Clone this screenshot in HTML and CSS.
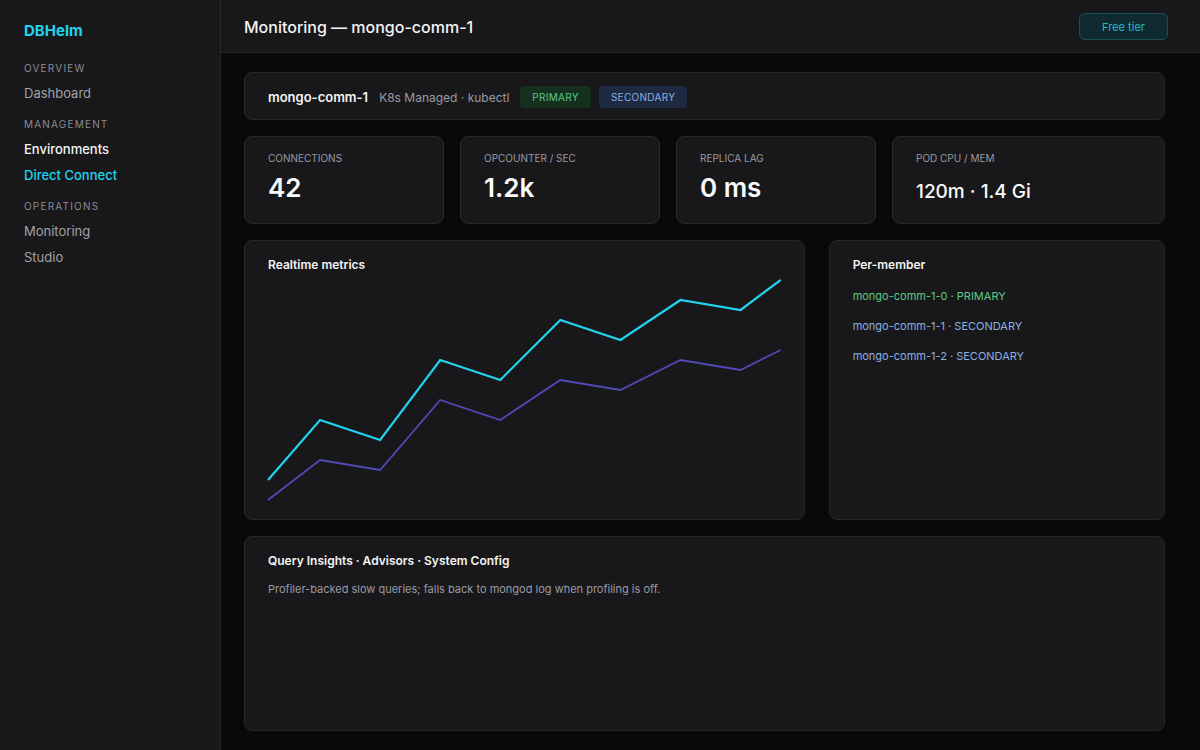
FILE: index.html
```html
<!DOCTYPE html>
<html lang="en">
<head>
    <meta charset="UTF-8">
    <meta name="viewport" content="width=device-width, initial-scale=1.0">
    <title>DBHelm - Monitoring</title>
    <link rel="stylesheet" href="styles.css">
</head>
<body>

    <div class="app">
        <!-- Sidebar navigation -->
        <aside class="sidebar">
            <div class="brand">DBHelm</div>

            <div class="nav-group">Overview</div>
            <a class="nav-link">Dashboard</a>

            <div class="nav-group">Management</div>
            <a class="nav-link strong">Environments</a>
            <a class="nav-link active">Direct Connect</a>

            <div class="nav-group">Operations</div>
            <a class="nav-link">Monitoring</a>
            <a class="nav-link">Studio</a>
        </aside>

        <div class="main">
            <header class="topbar">
                <h1>Monitoring — mongo-comm-1</h1>
                <button class="tier-button">Free tier</button>
            </header>

            <div class="content">
                <!-- Cluster summary -->
                <div class="card cluster-bar">
                    <span class="cluster-name">mongo-comm-1</span>
                    <span class="cluster-meta">K8s Managed · kubectl</span>
                    <span class="badge badge-primary">PRIMARY</span>
                    <span class="badge badge-secondary">SECONDARY</span>
                </div>

                <!-- Stats -->
                <div class="stats">
                    <div class="card stat">
                        <div class="stat-label">Connections</div>
                        <div class="stat-value">42</div>
                    </div>
                    <div class="card stat">
                        <div class="stat-label">Opcounter / sec</div>
                        <div class="stat-value">1.2k</div>
                    </div>
                    <div class="card stat">
                        <div class="stat-label">Replica lag</div>
                        <div class="stat-value">0 ms</div>
                    </div>
                    <div class="card stat">
                        <div class="stat-label">Pod CPU / MEM</div>
                        <div class="stat-value small">120m · 1.4 Gi</div>
                    </div>
                </div>

                <div class="panels">
                    <div class="card panel">
                        <h2>Realtime metrics</h2>
                        <svg class="chart" viewBox="0 0 512 220" preserveAspectRatio="none">
                            <polyline class="line-ops" points="0,200 52,140 112,160 172,80 232,100 292,40 352,60 412,20 472,30 512,0" />
                            <polyline class="line-conn" points="0,220 52,180 112,190 172,120 232,140 292,100 352,110 412,80 472,90 512,70" />
                        </svg>
                    </div>

                    <div class="card panel">
                        <h2>Per-member</h2>
                        <ul class="members">
                            <li class="member primary">mongo-comm-1-0 · PRIMARY</li>
                            <li class="member secondary">mongo-comm-1-1 · SECONDARY</li>
                            <li class="member secondary">mongo-comm-1-2 · SECONDARY</li>
                        </ul>
                    </div>
                </div>

                <div class="card panel insights">
                    <h2>Query Insights · Advisors · System Config</h2>
                    <p>Profiler-backed slow queries; falls back to mongod log when profiling is off.</p>
                </div>
            </div>
        </div>
    </div>

</body>
</html>
```

FILE: styles.css
```css
* {
    box-sizing: border-box;
}

body {
    margin: 0;
    font-family: Inter, "Noto Sans", Arial, sans-serif;
    background-color: #09090b;
    color: #e4e4e7;
}

.app {
    display: flex;
    height: 750px;
}

/* Sidebar */
.sidebar {
    width: 221px;
    flex-shrink: 0;
    background-color: #18181b;
    border-right: 1px solid #27272a;
    padding: 21px 24px;
}

.brand {
    color: #22d3ee;
    font-size: 15px;
    font-weight: 700;
    margin-bottom: 20px;
}

.nav-group {
    color: #8b8b93;
    font-size: 10px;
    letter-spacing: 1.2px;
    text-transform: uppercase;
    margin: 0 0 9px;
    line-height: 16px;
}

.nav-link {
    display: block;
    color: #a1a1aa;
    font-size: 13px;
    line-height: 16px;
    margin-bottom: 10px;
    cursor: pointer;
}

.nav-link + .nav-group {
    margin-top: 15px;
}

.nav-link.strong {
    color: #f4f4f5;
    font-weight: 500;
}

.nav-link.active {
    color: #22d3ee;
    font-weight: 500;
}

/* Main area */
.main {
    flex: 1;
    display: flex;
    flex-direction: column;
    min-width: 0;
}

.topbar {
    height: 53px;
    flex-shrink: 0;
    display: flex;
    align-items: center;
    justify-content: space-between;
    padding: 0 32px 2px 23px;
    background-color: #18181b;
    border-bottom: 1px solid #27272a;
}

.topbar h1 {
    margin: 0;
    font-size: 16px;
    font-weight: 500;
    color: #f4f4f5;
    padding-top: 3px;
}

.tier-button {
    font-family: inherit;
    font-size: 11px;
    color: #22b8cf;
    background-color: #0f2a30;
    border: 1px solid #1c4f59;
    border-radius: 6px;
    width: 89px;
    height: 27px;
    margin-top: 3px;
    cursor: pointer;
}

.content {
    flex: 1;
    display: flex;
    flex-direction: column;
    gap: 16px;
    padding: 19px 23px 19px;
    max-width: 967px;
    min-height: 0;
}

.card {
    background-color: #18181b;
    border: 1px solid #27272a;
    border-radius: 8px;
}

/* Cluster summary bar */
.cluster-bar {
    height: 48px;
    flex-shrink: 0;
    display: flex;
    align-items: center;
    padding: 2px 23px 0;
}

.cluster-name {
    font-size: 13px;
    font-weight: 600;
    color: #f4f4f5;
    margin-right: 11px;
}

.cluster-meta {
    font-size: 12px;
    color: #9a9aa2;
    margin-right: 11px;
}

.badge {
    font-size: 10px;
    letter-spacing: 0.3px;
    height: 22px;
    line-height: 22px;
    padding: 0 12px;
    border-radius: 4px;
    margin-right: 8px;
}

.badge-primary {
    background-color: #15301f;
    color: #5dc985;
}

.badge-secondary {
    background-color: #1d2a42;
    color: #8eb0e0;
}

/* Stats row */
.stats {
    display: grid;
    grid-template-columns: 200px 200px 200px 1fr;
    gap: 16px;
}

.stat {
    height: 88px;
    padding: 14px 23px;
}

.stat-label {
    font-size: 10px;
    color: #9a9aa2;
    text-transform: uppercase;
    line-height: 14px;
}

.stat-value {
    font-size: 26px;
    font-weight: 600;
    color: #fafafa;
    line-height: 34px;
    margin-top: 6px;
}

.stat-value.small {
    font-size: 19px;
    font-weight: 500;
    margin-top: 10px;
}

/* Panels */
.panels {
    display: grid;
    grid-template-columns: 5fr 3fr;
    gap: 24px;
}

.panel {
    padding: 15px 23px 19px;
}

.panel h2 {
    margin: 0;
    font-size: 12px;
    font-weight: 600;
    color: #f4f4f5;
    line-height: 18px;
}

.chart {
    display: block;
    width: 100%;
    height: 220px;
    margin-top: 6px;
    overflow: visible;
}

.chart polyline {
    fill: none;
    stroke-linejoin: miter;
}

.line-ops {
    stroke: #22d3ee;
    stroke-width: 2.2;
}

.line-conn {
    stroke: #5049b8;
    stroke-width: 1.8;
}

.members {
    list-style: none;
    margin: 14px 0 0;
    padding: 0;
}

.member {
    font-size: 11px;
    line-height: 16px;
    margin-bottom: 14px;
}

.member.primary {
    color: #5dc985;
}

.member.secondary {
    color: #8eb0e0;
}

.insights {
    flex: 1;
}

.insights p {
    margin: 12px 0 0;
    font-size: 11px;
    color: #9a9aa2;
}
```
